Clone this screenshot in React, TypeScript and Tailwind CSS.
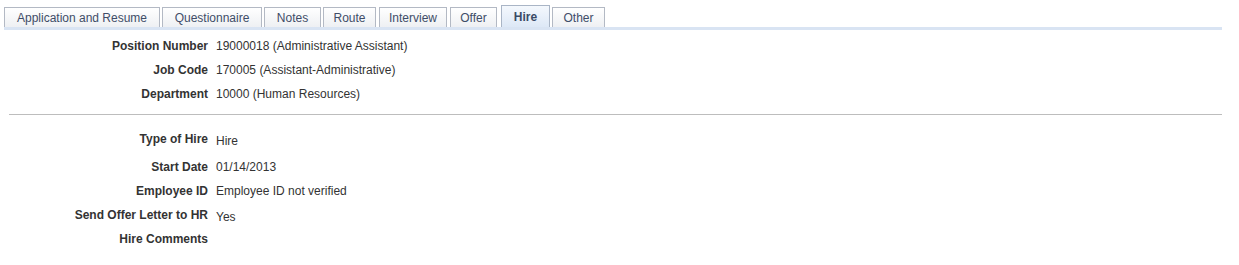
import React from "react";

const tabs = [
  { name: "Application and Resume", cls: "w-[156px]" },
  { name: "Questionnaire", cls: "w-[100px] ml-[2px]" },
  { name: "Notes", cls: "w-[57px] ml-[2px]" },
  { name: "Route", cls: "w-[53px] ml-[2px]" },
  { name: "Interview", cls: "w-[68px] ml-[3px]" },
  { name: "Offer", cls: "w-[47px] ml-[3px]" },
  { name: "Hire", cls: "w-[49px] ml-[4px]", active: true },
  { name: "Other", cls: "w-[53px] ml-[2px]" },
];

const Field = ({ label, value, className = "" }: { label: string; value?: string; className?: string }) => (
  <div className={`flex items-start ${className}`}>
    <div className="w-[208px] shrink-0 text-right font-bold text-[#333]">{label}</div>
    <div className="pl-2 text-[#333]">{value}</div>
  </div>
);

export default function App() {
  return (
    <div className="w-[1239px] h-[265px] bg-white text-[12px] leading-[14px]" style={{ fontFamily: "Arial, 'Liberation Sans', sans-serif" }}>
      <div className="pl-1 pt-[5px] w-[1222px]">
        <div className="flex items-end">
          {tabs.map((t) =>
            t.active ? (
              <div
                key={t.name}
                className={`${t.cls} h-[22px] flex items-center justify-center border border-b-0 border-[#a9b5c6] bg-gradient-to-b from-[#f4f8fd] to-[#dde8f6] font-bold text-[#3a4a66]`}
              >
                {t.name}
              </div>
            ) : (
              <div
                key={t.name}
                className={`${t.cls} h-[20px] flex items-center justify-center border border-b-0 border-[#b3b9c4] bg-gradient-to-b from-white to-[#eef0f3] text-[#3f4d68]`}
              >
                {t.name}
              </div>
            )
          )}
        </div>
        <div className="h-[3px] bg-[#d9e4f3]" />
      </div>

      <div className="pt-[9px]">
        <Field label="Position Number" value="19000018 (Administrative Assistant)" />
        <Field label="Job Code" value="170005 (Assistant-Administrative)" className="mt-[10px]" />
        <Field label="Department" value="10000 (Human Resources)" className="mt-[10px]" />
      </div>

      <div className="ml-[9px] w-[1213px] h-px bg-[#bdbdbd] mt-[13px]" />

      <div className="pt-[17px]">
        <div className="flex items-start">
          <div className="w-[208px] shrink-0 text-right font-bold text-[#333]">Type of Hire</div>
          <div className="pl-2 pt-[2px] text-[#333]">Hire</div>
        </div>
        <Field label="Start Date" value="01/14/2013" className="mt-[12px]" />
        <Field label="Employee ID" value="Employee ID not verified" className="mt-[10px]" />
        <div className="flex items-start mt-[10px]">
          <div className="w-[208px] shrink-0 text-right font-bold text-[#333]">Send Offer Letter to HR</div>
          <div className="pl-2 pt-[2px] text-[#333]">Yes</div>
        </div>
        <Field label="Hire Comments" className="mt-[8px]" />
      </div>
    </div>
  );
}
